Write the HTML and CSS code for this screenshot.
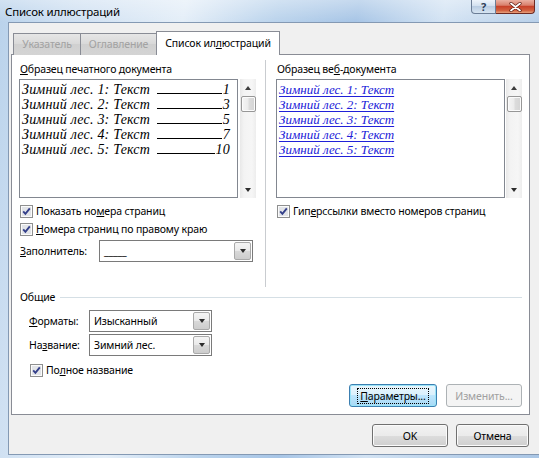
FILE: index.html
```html
<!DOCTYPE html>
<html lang="ru">
<head>
<meta charset="utf-8">
<title>Список иллюстраций</title>
<link rel="stylesheet" href="styles.css">
</head>
<body>
<div class="window">
  <div class="titlebar">
    <span class="title">Список иллюстраций</span>
    <div class="caption">
      <span class="capbtn help">?</span>
      <span class="capbtn close"><svg width="13" height="10" viewBox="0 0 13 10"><path d="M2 1.5 L11 8.5 M11 1.5 L2 8.5" stroke="#5a1a10" stroke-width="3.2" stroke-linecap="round"/><path d="M2 1.5 L11 8.5 M11 1.5 L2 8.5" stroke="#ffffff" stroke-width="1.8" stroke-linecap="round"/></svg></span>
    </div>
  </div>
  <div class="client">
    <div class="tabs">
      <div class="tab t1">Указатель</div>
      <div class="tab t2">Оглавление</div>
      <div class="tab active">Список ил<u>л</u>юстраций</div>
    </div>
    <div class="panel">
      <div class="previews">
        <div class="col col-left">
          <div class="label"><u>О</u>бразец печатного документа</div>
          <div class="preview-wrap">
            <div class="preview print">
              <div class="entry"><span class="etext">Зимний лес. 1: Текст</span><span class="leader"></span><span class="num">1</span></div>
              <div class="entry"><span class="etext">Зимний лес. 2: Текст</span><span class="leader"></span><span class="num">3</span></div>
              <div class="entry"><span class="etext">Зимний лес. 3: Текст</span><span class="leader"></span><span class="num">5</span></div>
              <div class="entry"><span class="etext">Зимний лес. 4: Текст</span><span class="leader"></span><span class="num">7</span></div>
              <div class="entry"><span class="etext">Зимний лес. 5: Текст</span><span class="leader"></span><span class="num">10</span></div>
            </div>
            <div class="sb">
              <div class="sb-btn"><span class="tri-up"></span></div>
              <div class="thumb"></div>
              <div class="sb-track"></div>
              <div class="sb-btn"><span class="tri-down"></span></div>
            </div>
          </div>
          <div class="check c1">
            <svg class="cbx" width="13" height="13" viewBox="0 0 13 13"><rect x="0.5" y="0.5" width="12" height="12" fill="#fbfbfb" stroke="#8e8f8f"/><rect x="2" y="2" width="9" height="9" fill="#e2e4e8"/><path d="M3.2 6.4 L5.4 8.8 L9.8 3.4" fill="none" stroke="#34408a" stroke-width="1.9"/></svg>
            <span>Показать но<u>м</u>ера страниц</span>
          </div>
          <div class="check c2">
            <svg class="cbx" width="13" height="13" viewBox="0 0 13 13"><rect x="0.5" y="0.5" width="12" height="12" fill="#fbfbfb" stroke="#8e8f8f"/><rect x="2" y="2" width="9" height="9" fill="#e2e4e8"/><path d="M3.2 6.4 L5.4 8.8 L9.8 3.4" fill="none" stroke="#34408a" stroke-width="1.9"/></svg>
            <span><u>Н</u>омера страниц по правому краю</span>
          </div>
          <div class="field">
            <span class="flabel fl-leader"><u>З</u>аполнитель:</span>
            <div class="combo combo-leader"><span class="cval">_____</span><span class="carrow"><span class="tri-down"></span></span></div>
          </div>
        </div>
        <div class="sep"></div>
        <div class="col col-right">
          <div class="label">Образец ве<u>б</u>-документа</div>
          <div class="preview-wrap">
            <div class="preview web">
              <div class="link">Зимний лес. 1: Текст</div>
              <div class="link">Зимний лес. 2: Текст</div>
              <div class="link">Зимний лес. 3: Текст</div>
              <div class="link">Зимний лес. 4: Текст</div>
              <div class="link">Зимний лес. 5: Текст</div>
            </div>
            <div class="sb sb-right">
              <div class="sb-btn"><span class="tri-up"></span></div>
              <div class="thumb"></div>
              <div class="sb-track"></div>
              <div class="sb-btn"><span class="tri-down"></span></div>
            </div>
          </div>
          <div class="check c1">
            <svg class="cbx" width="13" height="13" viewBox="0 0 13 13"><rect x="0.5" y="0.5" width="12" height="12" fill="#fbfbfb" stroke="#8e8f8f"/><rect x="2" y="2" width="9" height="9" fill="#e2e4e8"/><path d="M3.2 6.4 L5.4 8.8 L9.8 3.4" fill="none" stroke="#34408a" stroke-width="1.9"/></svg>
            <span>Гип<u>е</u>рссылки вместо номеров страниц</span>
          </div>
        </div>
      </div>
      <div class="group">
        <div class="group-head"><span>Общие</span><span class="gline"></span></div>
        <div class="grow g1">
          <span class="flabel"><u>Ф</u>орматы:</span>
          <div class="combo combo-small"><span class="cval">Изысканный</span><span class="carrow"><span class="tri-down"></span></span></div>
        </div>
        <div class="grow g2">
          <span class="flabel">На<u>з</u>вание:</span>
          <div class="combo combo-small"><span class="cval">Зимний лес.</span><span class="carrow"><span class="tri-down"></span></span></div>
        </div>
        <div class="check c3">
          <svg class="cbx" width="13" height="13" viewBox="0 0 13 13"><rect x="0.5" y="0.5" width="12" height="12" fill="#fbfbfb" stroke="#8e8f8f"/><rect x="2" y="2" width="9" height="9" fill="#e2e4e8"/><path d="M3.2 6.4 L5.4 8.8 L9.8 3.4" fill="none" stroke="#34408a" stroke-width="1.9"/></svg>
          <span>По<u>л</u>ное название</span>
        </div>
      </div>
      <div class="actions">
        <button class="btn focused btn-params"><span class="focus-rect"><u>П</u>араметры...</span></button>
        <button class="btn disabled btn-edit">Изменить...</button>
      </div>
    </div>
    <div class="footer">
      <button class="btn btn-ok">OK</button>
      <button class="btn btn-cancel">Отмена</button>
    </div>
  </div>
</div>
</body>
</html>
```

FILE: styles.css
```css
* { box-sizing: border-box; }
html, body { margin: 0; padding: 0; }
body {
  width: 539px;
  height: 458px;
  overflow: hidden;
  font-family: "Noto Sans", "Liberation Sans", sans-serif;
  font-size: 10.5px;
  letter-spacing: -0.15px;
  color: #000;
  background: #bcd3ea;
}
u { text-decoration: underline; text-underline-offset: 1px; }

.window {
  width: 539px;
  height: 458px;
  background:
    linear-gradient(180deg, rgba(255,255,255,0.35) 0px, rgba(255,255,255,0) 22px),
    linear-gradient(100deg, #b9d2eb 0%, #cfe0f2 12%, #e4eef8 30%, #bad3ec 45%, #a7c5e6 58%, #d3e3f3 72%, #b7cfe9 88%, #aac6e5 100%);
}

/* title bar */
.titlebar {
  height: 22px;
  display: flex;
  justify-content: space-between;
  align-items: flex-start;
}
.title {
  font-size: 11.5px;
  letter-spacing: -0.2px;
  line-height: 24px;
  padding-left: 5px;
  color: #000;
}
.caption {
  display: flex;
  margin-right: 4px;
}
.capbtn {
  height: 14px;
  display: flex;
  align-items: center;
  justify-content: center;
}
.help {
  width: 25px;
  border: 1px solid #6b7d96;
  border-top: none;
  border-radius: 0 0 0 4px;
  background: linear-gradient(#eef4fb, #d3e1f0 45%, #bacde3 50%, #d6e4f2);
  color: #2d3e58;
  font-size: 11px;
  font-weight: bold;
  line-height: 12px;
}
.close {
  width: 39px;
  border: 1px solid #6e2a22;
  border-top: none;
  border-left: none;
  border-radius: 0 0 4px 0;
  background: linear-gradient(#eab0a2, #d9806c 40%, #c7422a 50%, #d2603f 80%, #e8a27f);
}

/* client area */
.client {
  margin-left: 8px;
  width: 531px;
  height: 433px;
  background: #f0f0f0;
  border-top: 1px solid #8499b3;
  border-left: 1px solid #8499b3;
  border-bottom: 1px solid #8499b3;
  padding: 8px 0 0 2px;
}

/* tabs */
.tabs {
  display: flex;
  align-items: flex-end;
  height: 24px;
  margin-bottom: -1px;
  padding-left: 2px;
  position: relative;
  z-index: 1;
}
.tab {
  height: 22px;
  border: 1px solid #898c95;
  border-bottom: none;
  background: linear-gradient(#e6e6e6, #d8d8d8 50%, #d0d0d0 50%, #d4d4d4);
  color: #a2a2a2;
  line-height: 20px;
  text-align: center;
}
.t1 { width: 68px; }
.t2 { width: 75px; border-left: none; border-right: none; }
.tab.active {
  width: 124px;
  height: 24px;
  background: #fff;
  color: #000;
  line-height: 22px;
}

/* panel */
.panel {
  width: 519px;
  background: #fff;
  border: 1px solid #898c95;
  padding: 0 7px 7px 7px;
}
.previews {
  display: flex;
  align-items: flex-start;
}
.col { padding-top: 7px; }
.col-left { width: 237px; }
.col-right { width: 246px; }
.sep {
  width: 1px;
  height: 227px;
  margin: 5px 10px 0 9px;
  background: #c9ccd0;
}
.label {
  line-height: 15px;
  height: 15px;
  padding-left: 1px;
}
.preview-wrap {
  display: flex;
  margin-top: 2px;
  height: 119px;
}
.preview {
  height: 119px;
  border: 1px solid #828790;
  background: #fff;
  padding: 2px 0 0 2px;
}
.print { width: 219px; }
.web { width: 229px; padding-left: 2px; }

.entry {
  display: flex;
  align-items: baseline;
  font-family: "Liberation Serif", "DejaVu Serif", serif;
  font-style: italic;
  font-size: 14px;
  letter-spacing: 0.2px;
  line-height: 15px;
  height: 15px;
  width: 208px;
}
.etext { white-space: nowrap; }
.leader {
  flex: 1;
  border-bottom: 1px solid #000;
  margin: 0 1px 0 7px;
  height: 1px;
}
.num { white-space: nowrap; }

.link {
  font-family: "Liberation Serif", "DejaVu Serif", serif;
  font-style: italic;
  font-size: 13px;
  letter-spacing: 0;
  line-height: 15px;
  height: 15px;
  color: #2020d8;
  text-decoration: underline;
  text-underline-offset: 2px;
  white-space: nowrap;
}

/* scrollbar */
.sb {
  width: 16px;
  height: 119px;
  margin-left: 2px;
  display: flex;
  flex-direction: column;
  align-items: center;
  background: linear-gradient(to right, #e8e8e8, #f3f3f3 25%, #f6f6f6 75%, #ededed);
}
.sb-right { margin-left: 1px; }
.sb-btn {
  height: 17px;
  width: 16px;
  display: flex;
  align-items: center;
  justify-content: center;
}
.sb-track { flex: 1; }
.thumb {
  width: 15px;
  height: 16px;
  border: 1px solid #979797;
  border-radius: 2px;
  background: linear-gradient(to right, #f5f5f5, #ececec 45%, #dcdcdc 55%, #d4d4d4);
  box-shadow: inset 0 0 0 1px #fbfbfb;
}
.tri-up {
  width: 0; height: 0;
  border-left: 3.5px solid transparent;
  border-right: 3.5px solid transparent;
  border-bottom: 4px solid #3c3c3c;
}
.tri-down {
  width: 0; height: 0;
  border-left: 3.5px solid transparent;
  border-right: 3.5px solid transparent;
  border-top: 4px solid #2c2c2c;
}

/* checkboxes */
.check {
  display: flex;
  align-items: center;
  height: 13px;
  gap: 3px;
  line-height: 13px;
  white-space: nowrap;
}
.cbx { margin-left: 1px; flex: none; }
.c1 { margin-top: 7px; }
.c2 { margin-top: 5px; }
.c3 { margin-top: 8px; padding-left: 10px; }

/* fields */
.field {
  display: flex;
  align-items: center;
  margin-top: 4px;
}
.flabel { white-space: nowrap; }
.fl-leader { width: 80px; padding-left: 1px; }
.combo {
  display: flex;
  height: 22px;
  border: 1px solid #7a7a7a;
  background: #fff;
}
.combo-leader { width: 154px; }
.combo-small { width: 123px; }
.cval {
  flex: 1;
  padding-left: 4px;
  line-height: 20px;
  white-space: nowrap;
}
.carrow {
  width: 17px;
  margin: 1px;
  border: 1px solid #a9a9a9;
  border-radius: 2px;
  background: linear-gradient(#f4f4f4, #e9e9e9 50%, #d9d9d9 50%, #cdcdcd);
  display: flex;
  align-items: center;
  justify-content: center;
}

/* group */
.group { margin-top: 3px; }
.group-head {
  display: flex;
  align-items: center;
  height: 15px;
  line-height: 15px;
  padding-left: 1px;
}
.gline {
  flex: 1;
  height: 1px;
  background: #d5dfe5;
  margin-left: 5px;
}
.grow {
  display: flex;
  align-items: center;
  padding-left: 10px;
}
.grow .flabel { width: 60px; }
.g1 { margin-top: 5px; }
.g2 { margin-top: 2px; }

/* buttons */
.btn {
  height: 23px;
  padding: 0;
  border: 1px solid #707070;
  border-radius: 3px;
  background: linear-gradient(#f2f2f2, #ebebeb 50%, #dddddd 50%, #cfcfcf);
  box-shadow: inset 0 0 0 1px #fbfbfb;
  font-family: inherit;
  font-size: 10.5px;
  letter-spacing: -0.15px;
  color: #000;
  display: flex;
  align-items: center;
  justify-content: center;
}
.actions {
  display: flex;
  justify-content: flex-end;
  gap: 9px;
  margin-top: 7px;
}
.btn-params { width: 88px; }
.btn-edit { width: 76px; }
.focused {
  border-color: #3c7fb1;
  box-shadow: inset 0 0 0 1px #9be4f8;
  background: linear-gradient(#eaf6fd, #d9f0fc 50%, #bee6fd 50%, #a7d9f5);
}
.focus-rect {
  outline: 1px dotted #000;
  outline-offset: 0;
  padding: 0 2px;
  line-height: 14px;
}
.disabled {
  border-color: #adb2b5;
  background: #f4f4f4;
  box-shadow: none;
  color: #a0a0a0;
}
.footer {
  display: flex;
  justify-content: flex-end;
  gap: 8px;
  margin-top: 9px;
  padding-right: 10px;
}
.btn-ok { width: 76px; }
.btn-cancel { width: 73px; }
```
